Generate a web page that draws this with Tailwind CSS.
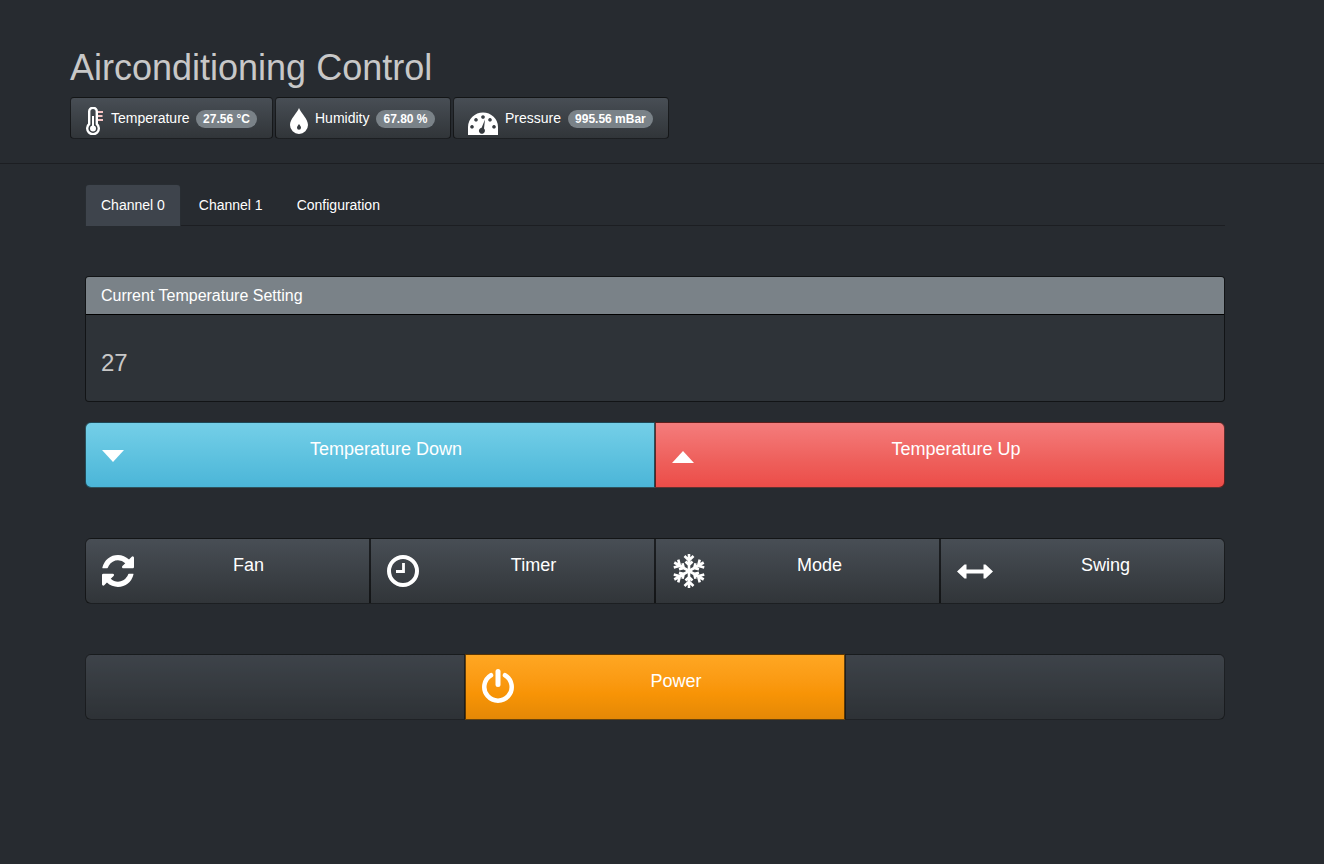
<!doctype html>
<html lang="en">
<head>
  <meta charset="UTF-8" />
  <title>Airconditioning Control</title>
  <script src="https://cdn.jsdelivr.net/npm/@tailwindcss/browser@4"></script>
</head>
<body class="bg-[#272b30] text-white font-['Liberation_Sans',Arial,sans-serif] min-h-screen">

  <!-- Header -->
  <header class="h-[164px] pt-[48px] px-[70px] border-b border-[#1c1e22]">
    <h1 class="text-[36px] leading-10 text-[#c8c8c8]">Airconditioning Control</h1>
    <div class="flex gap-[2px] mt-[9px]">
      <div class="flex h-[42px] w-[203px] pl-[15px] rounded border border-black/60 bg-linear-to-b from-[#484e55] via-[#3a3f44] via-60% to-[#313539] text-sm">
        <svg class="w-[18px] h-[28px] mt-[9px]" viewBox="0 0 18 28">
          <path d="M3.200 17V4.500a3.800 3.800 0 0 1 7.600 0V17a5.800 5.800 0 1 1-7.600 0z" fill="none" stroke="#fff" stroke-width="2.400"/>
          <circle cx="7" cy="21.400" r="3" fill="#fff"/>
          <rect x="6" y="9" width="2" height="12" fill="#fff"/>
          <path d="M12 5h5M12 9h4.500M12 13h5" stroke="#f6c4c4" stroke-width="1.800"/>
        </svg>
        <span class="ml-[7px] mt-[12px] leading-4">Temperature</span>
        <span class="ml-[6px] mt-[12px] h-[18px] px-[7.5px] rounded-[10px] bg-[#7a8288] text-xs font-bold leading-[18px]">27.56 °C</span>
      </div>
      <div class="flex h-[42px] w-[176px] pl-[14px] rounded border border-black/60 bg-linear-to-b from-[#484e55] via-[#3a3f44] via-60% to-[#313539] text-sm">
        <svg class="w-[18px] h-[26px] mt-[10px]" viewBox="0 0 18 26">
          <path fill-rule="evenodd" d="M9 0C11 5 18 11 18 17a9 9 0 0 1-18 0C0 11 7 5 9 0zM9 16c-1 1.500-2 2.500-2 3.700a2 2 0 0 0 4 0C11 18.500 10 17.500 9 16z" fill="#fff"/>
        </svg>
        <span class="ml-[7px] mt-[12px] leading-4">Humidity</span>
        <span class="ml-[7px] mt-[12px] h-[18px] px-[7px] rounded-[10px] bg-[#7a8288] text-xs font-bold leading-[18px]">67.80 %</span>
      </div>
      <div class="flex h-[42px] w-[216px] pl-[14px] rounded border border-black/60 bg-linear-to-b from-[#484e55] via-[#3a3f44] via-60% to-[#313539] text-sm">
        <svg class="w-[30px] h-[23px] mt-[14px]" viewBox="0 0 30 23">
          <path fill-rule="evenodd" d="M0 23v-8a15 14.500 0 0 1 30 0v8zM15 3.200a1.800 1.800 0 1 0 .01 0zM8 6a1.800 1.800 0 1 0 .01 0zM22 6a1.800 1.800 0 1 0 .01 0zM4 13a1.800 1.800 0 1 0 .01 0zM26 13a1.800 1.800 0 1 0 .01 0zM17 7.500l-3.400 8.300a3 3 0 1 0 2.400.8z" fill="#fff"/>
        </svg>
        <span class="ml-[7px] mt-[12px] leading-4">Pressure</span>
        <span class="ml-[7px] mt-[12px] h-[18px] px-[7px] rounded-[10px] bg-[#7a8288] text-xs font-bold leading-[18px]">995.56 mBar</span>
      </div>
    </div>
  </header>

  <main class="mx-[85px] w-[1140px] pt-[20px]">
    <!-- Tabs -->
    <nav class="flex h-[42px] border-b border-[#1c1e22] text-sm">
      <a class="h-[42px] px-[15px] pt-[12px] leading-[17px] rounded-t bg-[#3e444c] border border-b-0 border-[#1c1e22]/60" href="#">Channel 0</a>
      <a class="h-[41px] ml-[3px] px-[15px] pt-[13px] leading-[17px]" href="#">Channel 1</a>
      <a class="h-[41px] ml-[4px] px-[15px] pt-[13px] leading-[17px]" href="#">Configuration</a>
    </nav>

    <!-- Current setting -->
    <section class="mt-[50px] h-[126px] rounded border border-black/60 bg-[#2e3338] overflow-hidden">
      <div class="h-[38px] px-[15px] pt-[9px] bg-[#7a8288] border-b border-black text-base leading-[20px]">Current Temperature Setting</div>
      <div class="px-[15px] pt-[34px] text-2xl leading-[28px] text-[#c8c8c8]">27</div>
    </section>

    <!-- Temperature buttons -->
    <div class="grid grid-cols-2 mt-[20px] text-lg leading-5">
      <button class="flex h-[66px] p-4 rounded-l-md border border-black/60 bg-linear-to-b from-[#74cfe8] via-[#5bc0de] via-60% to-[#4bb5d8]">
        <svg class="w-[22px] h-8 mr-[10px] shrink-0" viewBox="0 0 22 32"><polygon points="0,11 22,11 11,23" fill="#fff"/></svg>
        <span class="flex-1 text-center">Temperature Down</span>
      </button>
      <button class="flex h-[66px] p-4 rounded-r-md border border-black/60 bg-linear-to-b from-[#f47c7c] via-[#ee5f5b] via-60% to-[#ec4c48]">
        <svg class="w-[22px] h-8 mr-[10px] shrink-0" viewBox="0 0 22 32"><polygon points="0,24 22,24 11,12" fill="#fff"/></svg>
        <span class="flex-1 text-center">Temperature Up</span>
      </button>
    </div>

    <!-- Function buttons -->
    <div class="grid grid-cols-4 mt-[50px] text-lg leading-5">
      <button class="flex h-[66px] p-4 rounded-l-md border border-black/60 bg-linear-to-b from-[#484e55] via-[#3a3f44] via-60% to-[#313539]">
        <svg class="w-8 h-8 mr-[10px] shrink-0" viewBox="128 128 1536 1536"><path fill="#fff" d="M1639 1056q0 5-1 7-64 268-268 434.5t-478 166.5q-146 0-282.5-55t-243.5-157l-129 129q-19 19-45 19t-45-19-19-45v-448q0-26 19-45t45-19h448q26 0 45 19t19 45-19 45l-137 137q71 66 161 102t187 36q134 0 250-65t186-179q11-17 53-117 8-23 30-23h192q13 0 22.5 9.5t9.5 22.5zm25-800v448q0 26-19 45t-45 19h-448q-26 0-45-19t-19-45 19-45l138-138q-148-137-349-137-134 0-250 65t-186 179q-11 17-53 117-8 23-30 23h-199q-13 0-22.5-9.5t-9.5-22.5v-7q65-268 270-434.5t480-166.5q146 0 284 55.5t245 156.5l130-129q19-19 45-19t45 19 19 45z"/></svg>
        <span class="flex-1 text-center">Fan</span>
      </button>
      <button class="flex h-[66px] p-4 border border-black/60 bg-linear-to-b from-[#484e55] via-[#3a3f44] via-60% to-[#313539]">
        <svg class="w-8 h-8 mr-[10px] shrink-0" viewBox="0 0 32 32" fill="none" stroke="#fff"><circle cx="16" cy="16" r="14" stroke-width="4"/><path d="M16.500 8v8.500H9" stroke-width="2.800"/></svg>
        <span class="flex-1 text-center">Timer</span>
      </button>
      <button class="flex h-[66px] p-4 border border-black/60 bg-linear-to-b from-[#484e55] via-[#3a3f44] via-60% to-[#313539]">
        <svg class="w-[34px] h-[36px] -mt-[2px] mr-[10px] shrink-0" viewBox="-17 -18 34 36" fill="none" stroke="#fff" stroke-width="2.600">
          <path d="M0 0V-17M-4.500 -15L0 -10.500L4.500 -15M-3.500 -9.500L0 -6L3.500 -9.500"/>
          <path transform="rotate(60)" d="M0 0V-17M-4.500 -15L0 -10.500L4.500 -15M-3.500 -9.500L0 -6L3.500 -9.500"/>
          <path transform="rotate(120)" d="M0 0V-17M-4.500 -15L0 -10.500L4.500 -15M-3.500 -9.500L0 -6L3.500 -9.500"/>
          <path transform="rotate(180)" d="M0 0V-17M-4.500 -15L0 -10.500L4.500 -15M-3.500 -9.500L0 -6L3.500 -9.500"/>
          <path transform="rotate(240)" d="M0 0V-17M-4.500 -15L0 -10.500L4.500 -15M-3.500 -9.500L0 -6L3.500 -9.500"/>
          <path transform="rotate(300)" d="M0 0V-17M-4.500 -15L0 -10.500L4.500 -15M-3.500 -9.500L0 -6L3.500 -9.500"/>
        </svg>
        <span class="flex-1 text-center">Mode</span>
      </button>
      <button class="flex h-[66px] p-4 rounded-r-md border border-black/60 bg-linear-to-b from-[#484e55] via-[#3a3f44] via-60% to-[#313539]">
        <svg class="w-[36px] h-8 mr-[10px] shrink-0" viewBox="0 0 36 32"><path fill="#fff" d="M0 16.500L7.500 9.500H9.500V14.500H26.500V9.500H28.500L36 16.500L28.500 23.500H26.500V18.500H9.500V23.500H7.500z"/></svg>
        <span class="flex-1 text-center">Swing</span>
      </button>
    </div>

    <!-- Power -->
    <div class="grid grid-cols-3 mt-[50px] text-lg leading-5">
      <div class="h-[66px] rounded-l-md border border-black/60 bg-linear-to-b from-[#484e55] via-[#3a3f44] via-60% to-[#313539] opacity-70"></div>
      <button class="flex h-[66px] p-4 border border-black/60 bg-linear-to-b from-[#ffa722] via-[#f89406] via-60% to-[#e48806]">
        <svg class="w-8 h-[34px] -mt-[2px] mr-[10px] shrink-0" viewBox="0 0 32 34" fill="none" stroke="#fff" stroke-linecap="round"><path d="M9 6.200A13.700 13.700 0 1 0 23 6.200" stroke-width="4.500"/><path d="M16 2.500V15.500" stroke-width="5"/></svg>
        <span class="flex-1 text-center">Power</span>
      </button>
      <div class="h-[66px] rounded-r-md border border-black/60 bg-linear-to-b from-[#484e55] via-[#3a3f44] via-60% to-[#313539] opacity-70"></div>
    </div>
  </main>
</body>
</html>
